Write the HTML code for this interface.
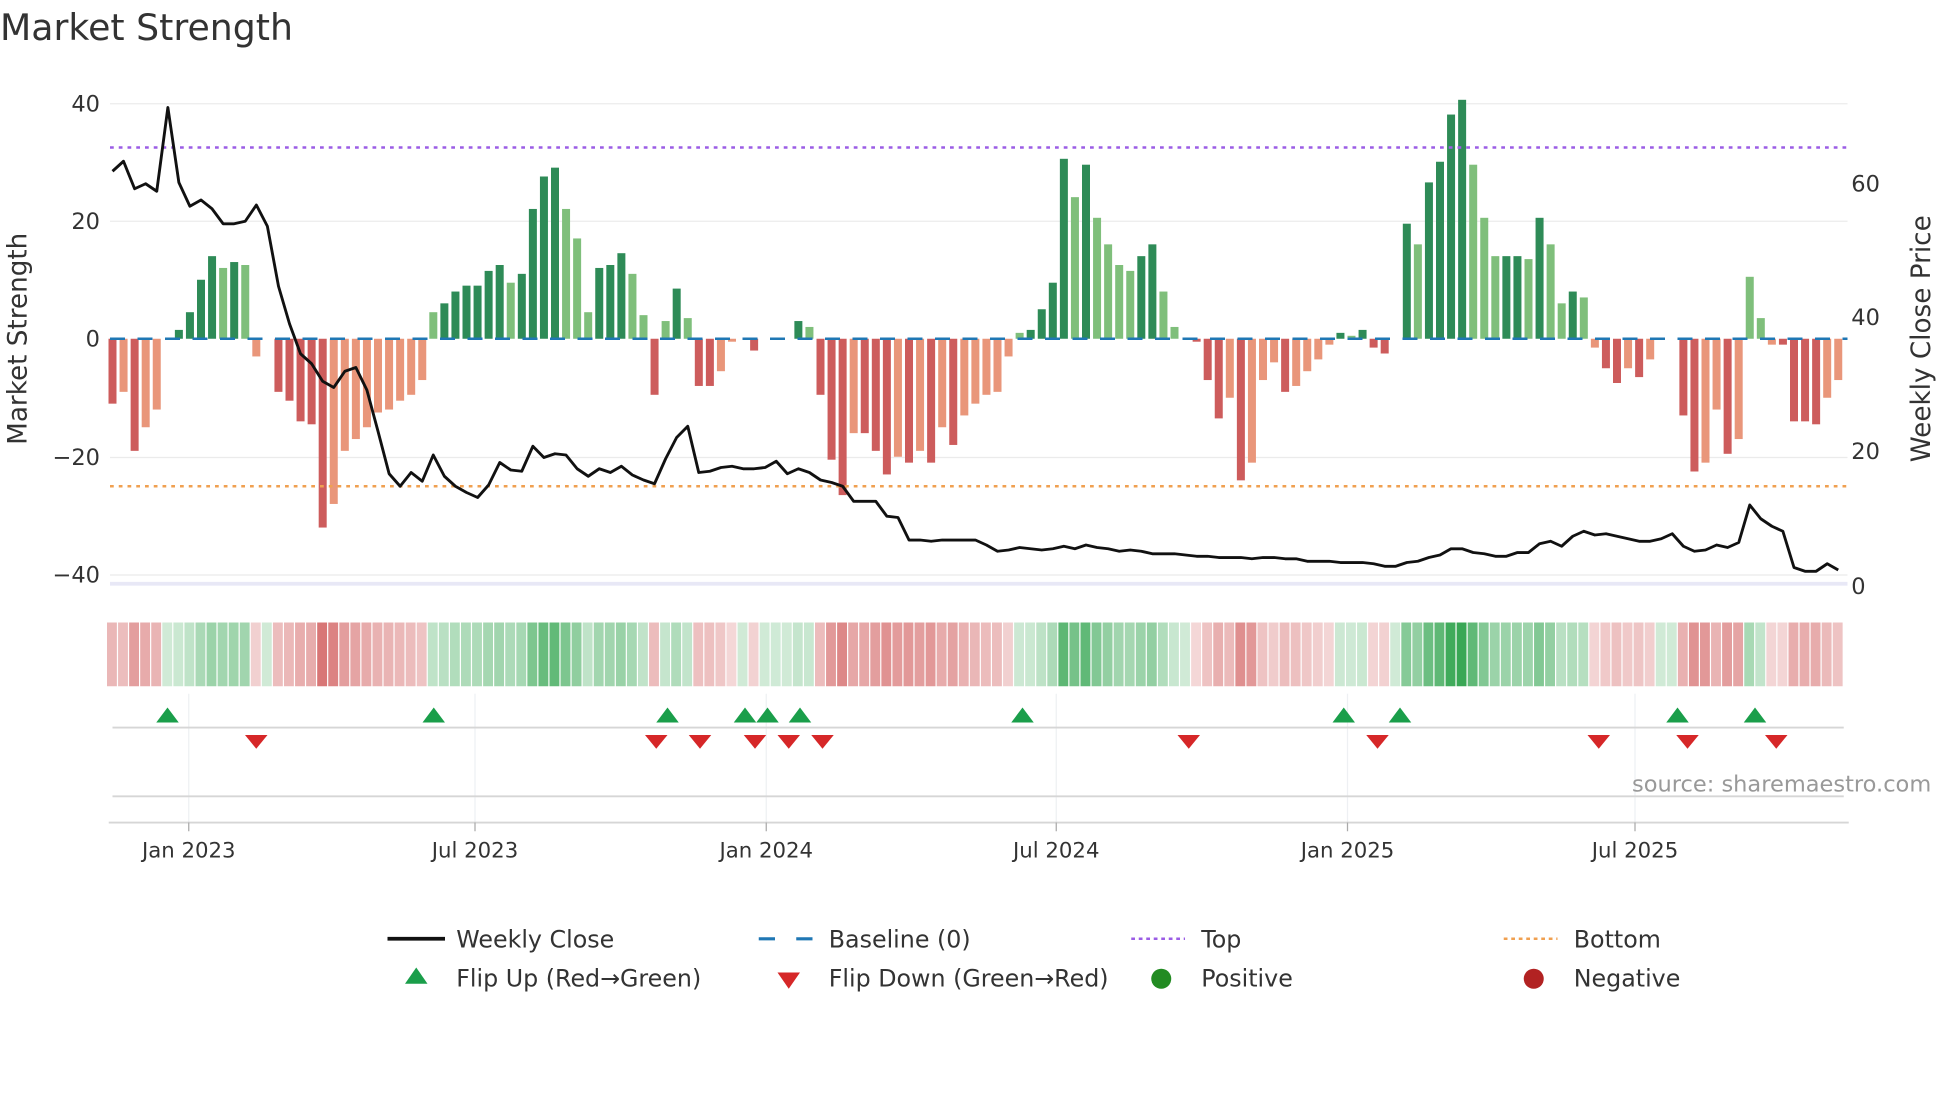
<!DOCTYPE html>
<html><head><meta charset="utf-8"><style>
html,body{margin:0;padding:0;background:#fff;width:1960px;height:1102px;overflow:hidden}
svg{display:block}
text{font-family:"DejaVu Sans","Liberation Sans",sans-serif;fill:#333}
</style></head><body>
<svg id="s" width="1960" height="1102" viewBox="0 0 1568 881.6" xmlns="http://www.w3.org/2000/svg">
<text x="0" y="32" font-size="29">Market Strength</text>
<g stroke="#ebebeb" stroke-width="1">
<line x1="88" x2="1478" y1="83" y2="83"/><line x1="88" x2="1478" y1="177" y2="177"/>
<line x1="88" x2="1478" y1="366" y2="366"/><line x1="88" x2="1478" y1="460" y2="460"/>
</g>
<line x1="88" x2="1478" y1="467" y2="467" stroke="#e8e8f6" stroke-width="3"/>
<g font-size="18" text-anchor="end">
<text x="80" y="89">40</text><text x="80" y="183">20</text><text x="80" y="277">0</text>
<text x="80" y="372">−20</text><text x="80" y="466">−40</text>
</g>
<g font-size="18">
<text x="1481" y="153">60</text><text x="1481" y="260">40</text><text x="1481" y="367">20</text><text x="1481" y="475">0</text>
</g>
<text transform="translate(21,271) rotate(-90)" font-size="21" text-anchor="middle">Market Strength</text>
<text transform="translate(1544,271) rotate(-90)" font-size="21" text-anchor="middle">Weekly Close Price</text>
<g id="bars"></g>
<line x1="88" x2="1478" y1="271" y2="271" stroke="#1f77b4" stroke-width="2" stroke-dasharray="12,10"/>
<line x1="88" x2="1478" y1="118" y2="118" stroke="#9b5de5" stroke-width="2" stroke-dasharray="3,4"/>
<line x1="88" x2="1478" y1="389" y2="389" stroke="#f0a050" stroke-width="2" stroke-dasharray="3,4"/>
<polyline id="price" fill="none" stroke="#111" stroke-width="2.3" stroke-linejoin="round"/>
<g id="heat"></g>
<g stroke="#eef0f3" stroke-width="1">
<line x1="151" x2="151" y1="555" y2="658"/><line x1="380" x2="380" y1="555" y2="658"/>
<line x1="613" x2="613" y1="555" y2="658"/><line x1="845" x2="845" y1="555" y2="658"/>
<line x1="1078" x2="1078" y1="555" y2="658"/><line x1="1308" x2="1308" y1="555" y2="658"/>
</g>
<line x1="90" x2="1475" y1="582" y2="582" stroke="#d6d6d6" stroke-width="1.5"/>
<line x1="90" x2="1475" y1="637" y2="637" stroke="#d6d6d6" stroke-width="1.5"/>
<line x1="87" x2="1479" y1="658" y2="658" stroke="#d6d6d6" stroke-width="1.5"/>
<g stroke="#aaa" stroke-width="1">
<line x1="151" x2="151" y1="658" y2="665"/><line x1="380" x2="380" y1="658" y2="665"/>
<line x1="613" x2="613" y1="658" y2="665"/><line x1="845" x2="845" y1="658" y2="665"/>
<line x1="1078" x2="1078" y1="658" y2="665"/><line x1="1308" x2="1308" y1="658" y2="665"/>
</g>
<g id="flips"></g>
<g font-size="17" text-anchor="middle">
<text x="151" y="686">Jan 2023</text><text x="380" y="686">Jul 2023</text><text x="613" y="686">Jan 2024</text>
<text x="845" y="686">Jul 2024</text><text x="1078" y="686">Jan 2025</text><text x="1308" y="686">Jul 2025</text>
</g>
<text x="1545" y="633" font-size="18" text-anchor="end" style="fill:#999">source: sharemaestro.com</text>
<g font-size="19">
<line x1="310" x2="356" y1="751" y2="751" stroke="#111" stroke-width="3"/>
<text x="365" y="758">Weekly Close</text>
<line x1="607" x2="650" y1="751" y2="751" stroke="#1f77b4" stroke-width="2.5" stroke-dasharray="13,17"/>
<text x="663" y="758">Baseline (0)</text>
<line x1="905" x2="948" y1="751" y2="751" stroke="#9b5de5" stroke-width="2" stroke-dasharray="3,3"/>
<text x="961" y="758">Top</text>
<line x1="1203" x2="1246" y1="751" y2="751" stroke="#f0a050" stroke-width="2" stroke-dasharray="3,3"/>
<text x="1259" y="758">Bottom</text>
<polygon points="333,774 342,787 324,787" fill="#1a9e4a"/>
<text x="365" y="789">Flip Up (Red→Green)</text>
<polygon points="622,778 640,778 631,791" fill="#d62728"/>
<text x="663" y="789">Flip Down (Green→Red)</text>
<circle cx="929" cy="783" r="8" fill="#228b22"/>
<text x="961" y="789">Positive</text>
<circle cx="1227" cy="783" r="8" fill="#b22222"/>
<text x="1259" y="789">Negative</text>
</g>
</svg>
<script>
var V=[-11,-9,-19,-15,-12,0,1.5,4.5,10,14,12,13,12.5,-3,0,-9,-10.5,-14,-14.5,-32,-28,-19,-17,-15,-12.5,-12,-10.5,-9.5,-7,4.5,6,8,9,9,11.5,12.5,9.5,11,22,27.5,29,22,17,4.5,12,12.5,14.5,11,4,-9.5,3,8.5,3.5,-8,-8,-5.5,-0.5,0,-2,0,0.2,0,3,2,-9.5,-20.5,-26.5,-16,-16,-19,-23,-20,-21,-19,-21,-15,-18,-13,-11,-9.5,-9,-3,1,1.5,5,9.5,30.5,24,29.5,20.5,16,12.5,11.5,14,16,8,2,0,-0.5,-7,-13.5,-10,-24,-21,-7,-4,-9,-8,-5.5,-3.5,-1,1,0.5,1.5,-1.5,-2.5,0,19.5,16,26.5,30,38,40.5,29.5,20.5,14,14,14,13.5,20.5,16,6,8,7,-1.5,-5,-7.5,-5,-6.5,-3.5,0,0,-13,-22.5,-21,-12,-19.5,-17,10.5,3.5,-1,-1,-14,-14,-14.5,-10,-7];
var NS="http://www.w3.org/2000/svg",bars=document.getElementById('bars'),heat=document.getElementById('heat');
function r(p,a){var e=document.createElementNS(NS,'rect');for(var k in a)e.setAttribute(k,a[k]);p.appendChild(e);}
for(var i=0;i<V.length;i++){var v=V[i],x=90+8.85*i,p=i?V[i-1]:v;var dark=Math.abs(v)>=Math.abs(p);
 var c=v>=0?(dark?'#2e8b57':'#7fbf7b'):(dark?'#cd5c5c':'#e9967a');
 var h=Math.abs(v)*4.72;if(h>0.3)r(bars,{x:x-3.2,y:v>=0?271-h:271,width:6.4,height:h,fill:c});
 var a=0.22+0.7*Math.min(Math.abs(v),40)/40;
 r(heat,{x:x-4.4,y:498,width:7.9,height:51,fill:v>=0?'rgba(40,160,70,'+a+')':'rgba(205,80,80,'+a+')'});}
var P=[137,129,151,147,153,86,146,165,160,167,179,179,177,164,181,229,259,283,291,305,310,297,294,312,345,379,389,378,385,364,381,389,394,398,388,370,376,377,357,366,363,364,375,381,375,378,373,380,384,387,367,350,341,378,377,374,373,375,375,374,369,379,375,378,384,386,389,401,401,401,413,414,432,432,433,432,432,432,432,436,441,440,438,439,440,439,437,439,436,438,439,441,440,441,443,443,443,444,445,445,446,446,446,447,446,446,447,447,449,449,449,450,450,450,451,453,453,450,449,446,444,439,439,442,443,445,445,442,442,435,433,437,429,425,428,427,429,431,433,433,431,427,437,441,440,436,438,434,404,415,421,425,454,457,457,451,456];
document.getElementById('price').setAttribute('points',P.map(function(y,i){return (90+8.85*i).toFixed(1)+','+y}).join(' '));
var fl=document.getElementById('flips');
function poly(pts,f){var e=document.createElementNS(NS,'polygon');e.setAttribute('points',pts);e.setAttribute('fill',f);fl.appendChild(e);}
[134,347,534,596,614,640,818,1075,1120,1342,1404].forEach(function(x){poly(x+',566 '+(x+9)+',578 '+(x-9)+',578','#1a9e4a');});
[205,525,560,604,631,658,951,1102,1279,1350,1421].forEach(function(x){poly((x-9)+',588 '+(x+9)+',588 '+x+',599','#d62728');});
</script>
</body></html>
